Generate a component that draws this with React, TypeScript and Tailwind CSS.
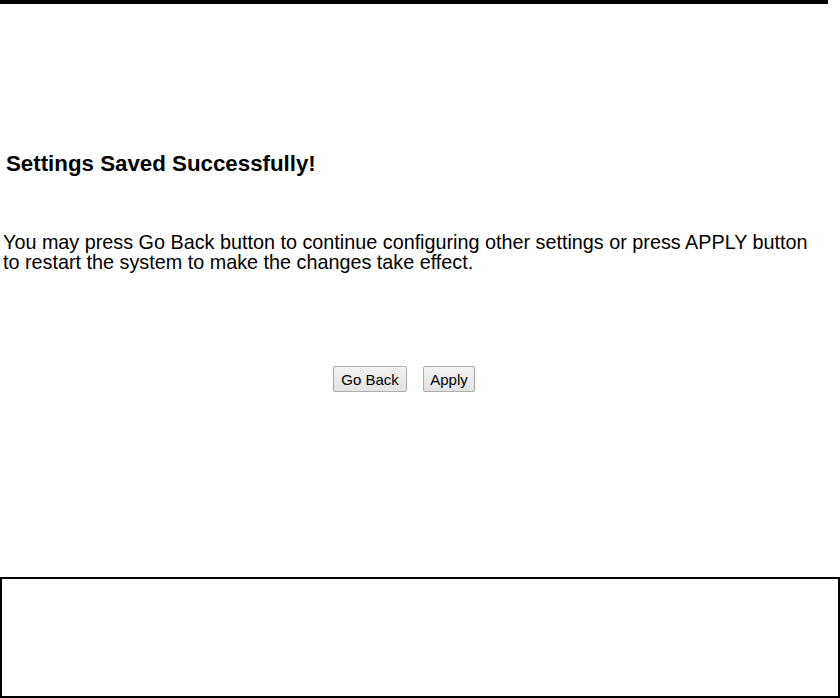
export default function App() {
  return (
    <div className="relative h-[698px] w-[840px] bg-white font-['Liberation_Sans',Arial,sans-serif] text-black">
      {/* top rule */}
      <div className="h-[4px] w-[828px] bg-black" />

      <div className="pt-[147px]">
        <h2 className="pl-[6px] text-[22.3px] font-bold leading-[26px]">Settings Saved Successfully!</h2>

        <p className="mt-[55px] pl-[3px] text-[19.8px] leading-[20px]">
          You may press Go Back button to continue configuring other settings or press APPLY button
          <br />
          to restart the system to make the changes take effect.
        </p>

        <div className="mt-[94px] flex gap-[16px] pl-[333px]">
          <button className="h-[26px] w-[74px] rounded-[2px] border border-[#adadad] bg-gradient-to-b from-[#f2f2f2] to-[#e3e3e3] text-[15px] leading-none text-black">
            Go Back
          </button>
          <button className="h-[26px] w-[52px] rounded-[2px] border border-[#adadad] bg-gradient-to-b from-[#f2f2f2] to-[#e3e3e3] text-[15px] leading-none text-black">
            Apply
          </button>
        </div>
      </div>

      <div className="absolute bottom-0 left-0 h-[121px] w-[840px] border-2 border-black" />
    </div>
  )
}
